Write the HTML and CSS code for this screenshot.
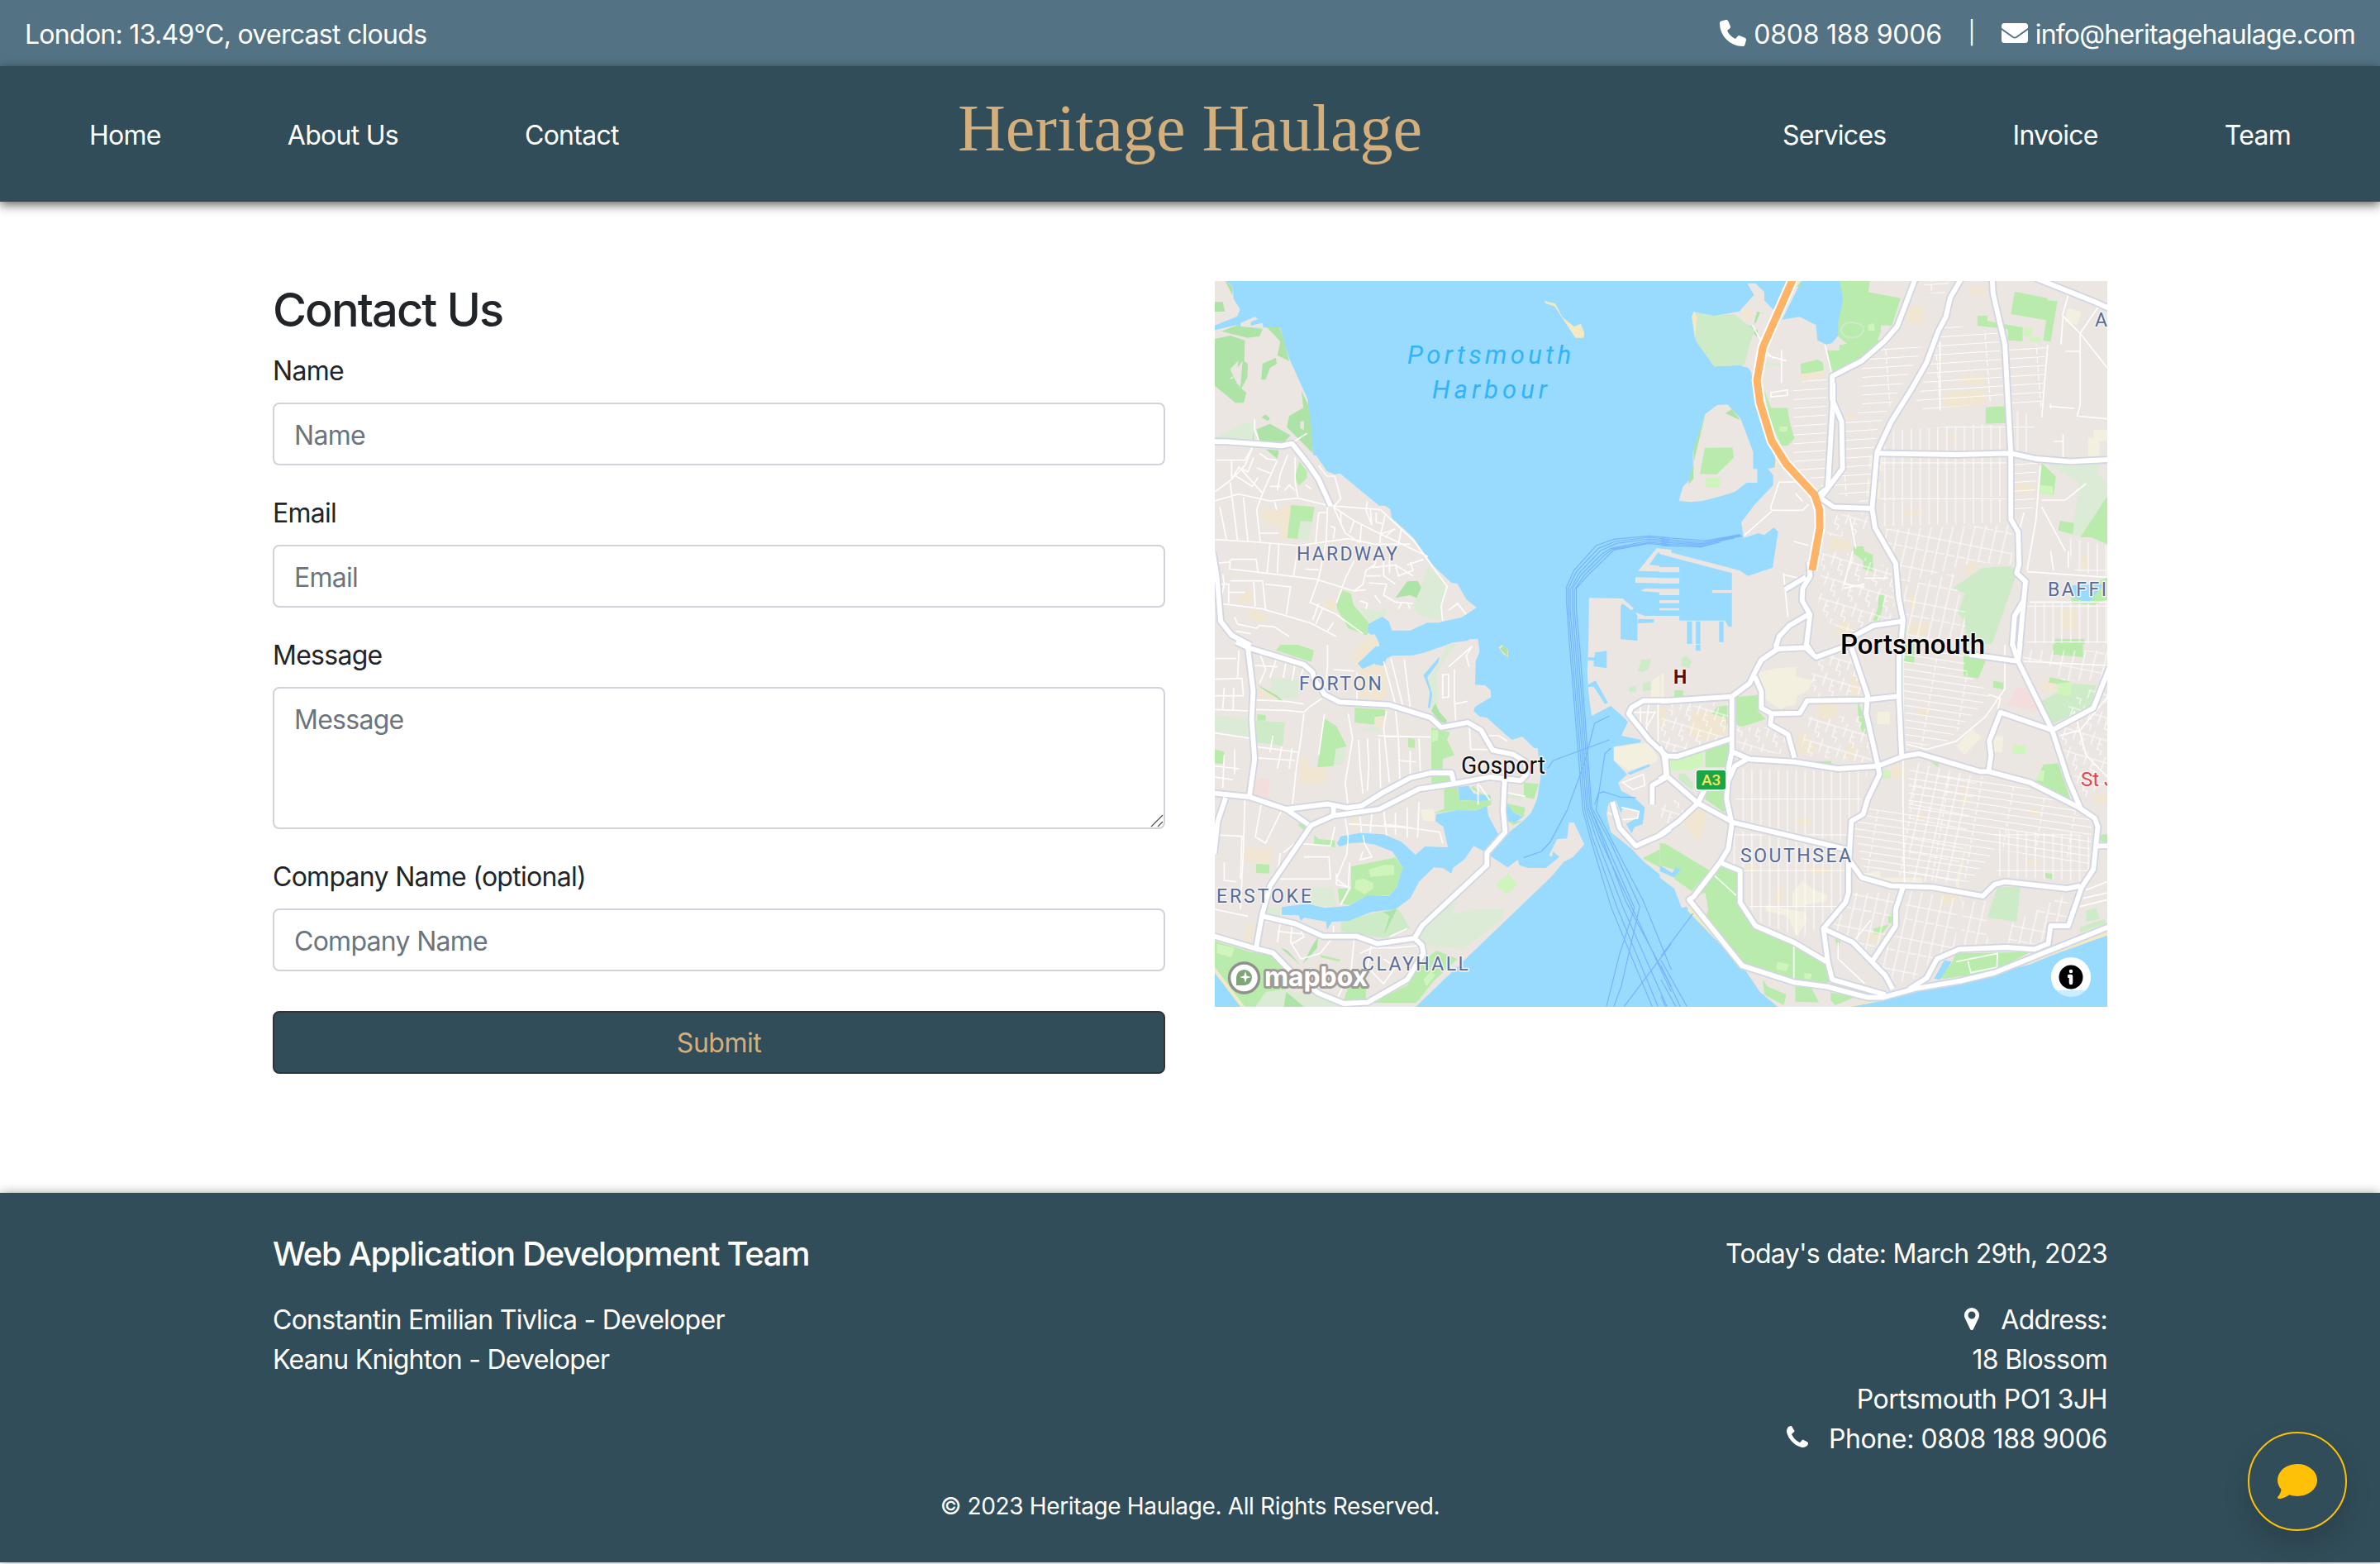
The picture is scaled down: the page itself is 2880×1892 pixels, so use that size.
FILE: index.html
```html
<!DOCTYPE html>
<html lang="en">
<head>
<meta charset="utf-8">
<title>Heritage Haulage - Contact</title>
<link rel="stylesheet" href="styles.css">
</head>
<body>
<div class="topbar">
  <span class="weather">London: 13.49°C, overcast clouds</span>
  <div class="topbar-contact">
    <svg class="icon" viewBox="0 0 512 512"><path d="M164.9 24.6c-7.7-18.6-28-28.5-47.4-23.2l-88 24C12.1 30.2 0 46 0 64C0 311.4 200.6 512 448 512c18 0 33.8-12.1 38.6-29.5l24-88c5.3-19.4-4.6-39.7-23.2-47.4l-96-40c-16.3-6.8-35.2-2.1-46.3 11.6L304.7 368C234.3 334.7 177.3 277.7 144 207.3L193.3 167c13.7-11.2 18.4-30 11.6-46.3l-40-96z"/></svg>
    <span class="tel">0808 188 9006</span>
    <span class="bar">|</span>
    <svg class="icon" viewBox="0 0 32 32"><rect y="4" width="32" height="24" rx="3.5"/><path class="flap" d="M-1 10.300L14 21Q16 22.300 18 21L33 10.300"/></svg>
    <span class="mail">info@heritagehaulage.com</span>
  </div>
</div>
<nav class="navbar">
  <div class="links"><a>Home</a><a>About Us</a><a>Contact</a></div>
  <a class="brand">Heritage Haulage</a>
  <div class="links links-end"><a>Services</a><a>Invoice</a><a>Team</a></div>
</nav>

<main class="container">
  <form class="contact">
    <h3>Contact Us</h3>
    <label for="name">Name</label>
    <input id="name" class="control" placeholder="Name">
    <label for="email">Email</label>
    <input id="email" class="control" placeholder="Email">
    <label for="message">Message</label>
    <div class="message">
      <textarea id="message" class="control" rows="3" placeholder="Message"></textarea>
      <svg class="grip" viewBox="0 0 16 16"><path d="M1 15L15 1M9 15L15 9"/></svg>
    </div>
    <label for="company">Company Name (optional)</label>
    <input id="company" class="control" placeholder="Company Name">
    <button class="submit" type="button">Submit</button>
  </form>

  <div class="map">
  <svg class="map-canvas" viewBox="0 0 1080 878" width="1080" height="878">
    <defs>
      <pattern id="grid-ns" width="30" height="130" patternUnits="userSpaceOnUse"><path class="street" d="M8 0V130M0 40H30"/></pattern>
      <pattern id="grid-ew" width="170" height="32" patternUnits="userSpaceOnUse" patternTransform="rotate(-4)"><path class="street" d="M0 10H170M60 10V32"/></pattern>
      <pattern id="grid-tilt" width="36" height="120" patternUnits="userSpaceOnUse" patternTransform="rotate(12)"><path class="street" d="M8 0V120M0 30H36M8 80H36"/></pattern>
      <pattern id="grid-slope" width="110" height="26" patternUnits="userSpaceOnUse" patternTransform="rotate(9)"><path class="street" d="M0 10H110M50 10V26"/></pattern>
      <pattern id="grid-mix" width="62" height="78" patternUnits="userSpaceOnUse" patternTransform="rotate(18)"><path class="street" d="M8 0V50M0 20H62M34 20V60H50M34 40H46M50 60V78"/></pattern>
      <g id="roads">
        <g transform="translate(-10 -10) scale(.35714 .33333)">
          <path d="M20 612L70 613L255 628L290 620L345 695L380 750L420 845"/>
          <path d="M22 1015L35 1100L48 1265L85 1315L150 1352"/>
        </g>
        <g transform="translate(-10 440) scale(.35714 .33333)">
          <path d="M100 -10L140 10L330 72L360 100L365 125L400 180L450 208L620 218L760 265L795 300L885 282L930 310L970 383L1040 398L1080 425L1085 470L1065 493L960 480L835 505L720 523L585 597L430 620L355 655L320 710L215 875L188 980L168 1100"/>
          <path d="M140 10L158 170L153 270L163 415L145 552"/>
          <path d="M20 538L145 552L270 597L410 578L430 582L475 592L525 585L600 535L690 483L760 465L830 465L838 500"/>
          <path d="M270 597L345 652M430 580V620M65 555L38 640L26 760"/>
          <path d="M20 1056L165 1102L225 1118L290 1190L380 1265L465 1302L545 1298L680 1215L735 1120L730 1090L705 1065L580 1085L510 1058L395 1058L300 1012L190 985"/>
          <path d="M705 1065L730 1020L950 800V755L1012 680L1005 600L1010 490"/>
          <path d="M1570 203H1480L1440 228L1430 250L1500 345L1555 400L1560 480L1510 510V580"/>
          <path d="M1375 570L1400 665L1455 730L1540 690L1570 668"/>
        </g>
        <g transform="translate(540 -10) scale(.35714 .33333)">
          <path d="M862 20L800 195L755 250L680 320L580 375L580 460L612 540L615 710L545 810"/>
          <path d="M583 400L583 460L565 780L530 810L585 850L715 855"/>
          <path d="M1018 20L980 90L965 160L940 210L900 325L850 420L780 540L732 650L715 855L725 925L795 1055L805 1180L820 1260L812 1355"/>
          <path d="M1122 20L1125 75L1165 260L1185 655V895L1210 940L1213 1060L1205 1090L1235 1120L1228 1200L1215 1355M1228 1190L1198 1245L1190 1355"/>
          <path d="M1270 20L1475 108L1520 130"/>
          <path d="M735 655L1000 660L1185 655L1270 675L1385 685L1520 678"/>
          <path d="M502 1048L505 1100L480 1145L478 1190L505 1240L492 1355M420 1150L490 1105M500 1240L435 1280L400 1320L390 1355M650 1320L720 1280L815 1265"/>
        </g>
        <g transform="translate(540 440) scale(.35714 .33333)">
          <path d="M0 205L240 188L300 140L320 95L340 55L395 15L490 10L525 45L640 0M390 -5V20M490 -5L515 35"/>
          <path d="M240 188V390L230 440L222 560L240 650L228 740L200 790L110 915L95 925L275 1165L450 1225L560 1240L700 1280L750 1280L860 1248L1015 1220L1130 1190L1520 1022"/>
          <path d="M245 390L300 415L450 425L600 450L735 440L820 405L875 395L1080 460L1110 460L1250 500L1415 590L1470 630L1480 660L1465 815L1425 880L1380 1020H1320L1312 1085L1265 1105L1170 1098L1010 1105L935 1140L900 1210L840 1250"/>
          <path d="M-5 370L10 403L55 405L240 340M10 400L18 475L125 575L245 645L640 745M-5 690L60 640L125 575L150 520M-5 490L18 475M300 410L250 440L225 500"/>
          <path d="M318 115L340 170V230L375 250L470 248L495 203L690 200L800 187M375 250L370 290L430 325L452 410"/>
          <path d="M645 10L700 185L695 250L735 440L740 470L700 560L685 615L645 640L637 780L680 845L780 875L920 880L1090 912L1130 870L1165 860L1375 885L1420 875"/>
          <path d="M806 -5V190L815 400"/>
          <path d="M635 780V900L625 935L550 1030L565 1150L580 1215L760 1270M550 1030L650 1080L760 1200L785 1250M820 880L795 960V1020L715 1150"/>
          <path d="M200 790L268 820V935L320 1020L450 1080L560 1150"/>
          <path d="M1045 35L1210 60L1325 310L1380 490L1420 590M1190 -5L1210 60L1217 -5"/>
          <path d="M1520 80L1465 230L1325 310L1150 245L1112 350L1118 400L1110 460M1480 730H1520"/>
        </g>
      </g>
    </defs>

    <!-- land and inlets, north-west -->
    <g transform="translate(-10 -10) scale(.35714 .33333)">
      <path class="land" d="M20 20H55L88 50L92 95L114 133L104 158L20 195Z"/>
      <path class="land" d="M20 210L100 190L115 200L250 198L262 250L280 310L343 460L352 560L362 662L372 664L408 720L435 732L452 728L585 845H605L622 858L628 890L700 960L770 1065L830 1125L850 1128L880 1185L915 1215L865 1250L785 1270H748L690 1298L628 1298L618 1265L595 1248L548 1275L543 1315L570 1312L585 1345V1356H20Z"/>
      <path class="land" d="M115 182L163 160L175 168L150 178V192L190 182L192 198H115ZM828 1343L885 1335L890 1330L920 1328L922 1356H815Z"/>
      <path class="sand" d="M1144 102L1182 112L1205 160L1245 195L1268 185L1280 218L1278 236H1250L1180 122L1150 112Z"/>
      <path class="land" d="M1296 1180L1410 1182L1448 1218L1440 1225L1410 1200L1403 1210V1330L1460 1335V1245L1453 1232L1485 1245H1575V1356H1294Z"/>
      <path class="land" d="M1575 1005L1525 1000L1462 1082L1575 1085V1068L1500 1060L1530 1015L1575 1027ZM1453 1105L1575 1108V1127L1453 1125ZM1470 1155L1485 1146L1575 1147V1170H1543V1188H1575V1197H1540V1215H1575V1223H1535V1160Z"/>
      <path class="water" d="M1462 1256L1517 1258L1515 1270L1462 1272Z"/>
      <path class="wood" d="M62 28L88 52V82ZM28 240L80 228L130 245L128 320L140 330L138 380L118 420L135 436L126 472H98L28 410ZM50 212L100 192L190 204L180 230L140 236ZM205 198H248L262 245L280 320L240 300L250 250ZM28 106H55L62 140L28 142ZM190 330L235 308L238 330L215 345L200 388H185ZM322 430L345 480L355 560L360 655L300 590L272 560L280 520L328 490ZM170 568L215 548L285 590L255 625L180 615ZM186 525L200 514L215 528L208 538ZM160 560V610H155ZM640 1180L680 1120L715 1118L730 1145L715 1182L690 1170ZM765 1205L795 1165L788 1205ZM200 640L245 645L240 675Z"/>
      <path class="land" d="M80 350L108 318L105 345L122 320L115 415L102 400ZM78 385L90 373V385ZM318 540L330 538V570L318 565Z"/>
      <path class="grass-soft" d="M28 600L130 545L163 543L155 610H28ZM310 900L358 902L345 972L308 968ZM728 1140L750 1062L815 1138L795 1210L800 1262L720 1245L700 1210ZM495 1165L520 1215L590 1230L610 1210V1240L550 1270Z"/>
      <path class="park" d="M286 842L366 850L358 903L318 900L308 966L273 962ZM315 685L340 720V745L312 773L300 740ZM462 1152L490 1165L498 1205L548 1268L543 1316L480 1290L443 1220L440 1195ZM270 1356L290 1345L300 1356Z"/>
      <path class="school" d="M195 852L258 860V842H286L273 966L248 964L250 925L175 890ZM135 1152H155L150 1198L98 1195ZM145 1215L208 1242L200 1270L140 1258ZM408 1178L440 1192L430 1230L396 1215ZM548 1305L585 1345V1356H520Z"/>
      <path class="street" d="M28 795L85 750L110 705L190 800L240 680M32 680H130L155 635L130 700L85 750V680M160 670L140 722L120 712M28 828L108 803L215 828L310 818L415 845L590 860L700 970L815 1138L795 1210L800 1262M80 760L105 970M125 815L140 975M45 850L68 970M28 968L180 978L310 990L480 965L570 985L690 985M190 800L170 860L182 975M180 655L205 675L235 680M170 708L222 730M100 738L155 775L175 742M240 790L250 730L275 660M300 670V760L310 815M215 775H250M230 830L238 860M410 850L405 980L380 1110L350 1200M380 870H405M370 980L380 870M430 850L500 900L590 948L750 1030M430 850L470 945L520 980M455 868V910M500 900L485 945M525 910L520 980M590 948L585 1000M590 948L640 930M605 880L590 948M545 830L540 860L560 915L555 860M575 870V905L595 910M635 930L605 960M660 930L650 985M435 740L455 820L430 850M380 700L408 738H435M182 945H245M28 1055L75 1050L85 1040H168L175 1090M80 1050L78 1075L200 1090L370 1112L500 1155L540 1150M245 983L240 1090M215 983L205 1090M310 995L295 1100M335 1075L380 1078M500 1045L470 1110L440 1200M420 920L435 925L430 965M55 1095L60 1130L45 1200L190 1220L350 1270L440 1320M80 1118H190L200 1220M160 1122L165 1210M45 1130H75V1200M78 1160H130M200 1130L285 1140L270 1240M95 1250L105 1275L170 1290L180 1280L230 1285L280 1320M100 1300L150 1310M350 1195L440 1240L530 1310M380 1200L360 1260M395 1215L370 1275M410 1300L430 1270M560 1070L640 1060L700 1100M580 1010L570 1060L540 1080L530 1130L500 1155M600 1050V1100L640 1130M620 1040V1090M640 1060L650 1100L700 1080L690 1050M540 1100H590M550 1125L610 1130L600 1170L640 1195L700 1200M570 1170L590 1200M660 1200L650 1220M680 1195L690 1220M520 1190L545 1200L540 1220M735 1040L680 1060M820 1225L850 1200L880 1240M163 530V570L180 615M285 620L340 583M265 790L280 770L300 790M335 770L355 785"/>
    </g>

    <!-- land and inlets, north-east -->
    <g transform="translate(540 -10) scale(.35714 .33333)">
      <path class="land" d="M292 38H320L350 70V100L383 138L430 20H480L410 170L470 160L525 190L530 245L560 260L580 255L602 225V180L617 100L615 50L605 20H1520V1356H-4V1005L265 1080L295 1100L378 1070L397 940L382 925L350 952L330 945L280 962L272 905L318 840L345 810L380 770V735L362 712L388 705V680L375 630L320 450L305 360L295 345L265 335L180 340L120 250L105 160L110 142L180 157L265 140L315 80Z"/>
      <path class="water" d="M-6 1020L240 1090V1285H228L217 1262H62V1245H-6ZM88 1265H105V1356H88ZM118 1265H133V1356H118ZM197 1265H212V1340H197Z"/>
      <path class="land" d="M-6 1068H62V1087H-6ZM-6 1108H62V1128H-6ZM-6 1147H62V1170H-6ZM-6 1188H62V1199H-6ZM-6 1217H62V1225H-6ZM173 1152H240V1162H173Z"/>
      <path class="land" d="M60 828L75 775L108 740V650L150 512L190 480L225 478L270 530L312 650V712H326V762H290L250 795L205 810L140 828L100 832Z"/>
      <path class="wood" d="M218 510L240 495L268 535ZM150 515L110 690V640ZM110 690V748L92 768ZM300 190L328 210L325 232L303 208ZM205 153L250 152V175ZM315 185L325 140L355 150L335 145L322 180ZM460 50L475 32V50Z"/>
      <path class="lawn" d="M110 142L180 157L250 152L318 208L300 260L282 335L180 340L120 250L105 160Z"/>
      <path class="sand" d="M104 160L112 140L122 160L115 240ZM388 672L398 690L390 710H385Z"/>
      <path class="park" d="M148 635L242 634L246 672L188 732L132 730ZM605 30H708L702 70L812 92L782 192L745 190V215L735 240L738 256L680 325L580 370L562 283L605 282V262L630 258L600 230V180L617 100ZM472 330L530 315L548 325L552 355L475 368ZM348 420L372 490H428L438 550L452 600L430 628H408L370 540ZM1198 68L1310 92V100L1343 103L1320 250L1295 246L1305 172L1185 150ZM1072 155H1106V175L1225 198V248L1175 245V205L1072 192ZM1100 488L1168 484V545L1100 548ZM1290 690L1338 740L1330 808L1282 800ZM1352 900L1400 908L1398 950L1345 935ZM1512 810V985L1458 960H1420ZM652 993H685L690 1012L718 1022V1085L685 1075V1045L652 1018ZM737 1168H755V1200L738 1262H718L735 1215ZM1335 1328L1435 1330V1356H1333ZM1390 1165L1512 1105V1185L1470 1205L1390 1200Z"/>
      <path class="grass-soft" d="M1300 690L1490 695L1475 730L1512 760V810L1420 958L1395 950L1415 760ZM355 325L405 328V340H355Z"/>
      <path class="lawn" d="M990 1142L1090 1070L1180 1065L1210 1078L1120 1352L1036 1350L1030 1265L1005 1235L1030 1165Z"/>
      <path class="pitch" d="M1230 198L1258 203L1255 232L1228 228ZM1250 235H1288V250H1250ZM152 745H200V778H152ZM402 558H428V576H402ZM700 190L722 182L725 210H702ZM1282 770L1328 775V808L1282 800ZM830 1290L852 1295L848 1318H830Z"/>
      <path class="school" d="M840 118L888 125V188L830 178ZM1055 48L1102 55L1095 85L1048 80ZM475 368L552 355V378L475 390ZM1022 370L1095 375V408L1018 405ZM965 435L1095 425V480L952 486ZM1200 768L1265 770L1260 798L1202 792ZM828 860H885V882H828ZM572 960L642 975L638 1015L565 1000ZM1032 1060L1055 1050L1070 1055L1060 1090L1035 1100ZM840 1160H855L865 1215L848 1215ZM1352 1222L1412 1225L1408 1298L1352 1295ZM1425 1025L1450 1028V1070H1425ZM622 530L650 500L655 530ZM835 1270L905 1268L900 1320L835 1318ZM275 125L310 140L300 180L272 160ZM978 585H1000V608H978ZM585 1305L620 1255L650 1290V1312Z"/>
      <path class="retail" d="M1378 128L1425 142L1410 188L1368 178ZM1465 570H1512V610H1485V668H1448V600H1465ZM700 745L745 760L740 820L695 810ZM705 668H752V720L705 710Z"/>
      <path class="water" d="M1392 1135L1500 1130L1450 1198L1400 1180Z"/>
      <path fill="url(#grid-ew)" d="M680 330L740 260L890 270L820 400L735 560L720 640L682 500ZM950 185L1140 215L1165 470L950 490L900 500L860 480L945 240ZM448 400L560 380V790L450 700ZM1175 260H1305L1290 490L1190 480ZM620 540L680 500L725 640L700 840L570 790L625 710ZM900 20H985L960 80L880 70ZM1195 690H1275L1260 880H1195Z"/>
      <path fill="url(#grid-ns)" d="M790 570L1100 550L1185 560V645L750 645ZM750 670L1180 665V810L740 830ZM740 835L975 815L1180 820V905L740 920ZM1195 500L1265 520V650H1195ZM1370 960L1512 990V1105L1400 1080ZM1240 1200H1512V1345H1240Z"/>
      <path fill="url(#grid-tilt)" d="M745 930L1190 915V1060L1060 1050L810 1130ZM820 1140L990 1090L1030 1230V1345H835Z"/>
      <path fill="url(#grid-mix)" d="M545 1010L650 1020L780 1070L795 1250L650 1310L530 1250ZM575 880L700 870V960L560 955Z"/>
      <path class="street" d="M372 850L400 760L480 758M372 850Q370 862 380 862H480L500 840M280 955L375 865M370 435L428 425V445L372 450V435M408 280V400M360 300L425 320M455 800L480 830M310 190L360 290L380 310M555 260L580 370M1380 1010V1070M1290 30L1385 60L1360 155L1420 220L1512 345M1355 260L1362 160M1420 220L1490 110M1420 220V480L1410 520L1512 530M1370 285H1420M1315 485L1400 492M1320 475V492M1362 585V675M1330 612H1362M1440 765L1370 825H1290M945 250V500M1310 262L1290 525M1230 870L1215 930M1240 1085L1512 1105M1250 1195H1512M415 1090L430 1250M415 1095L465 1108M1285 700L1270 900L1240 1080M640 890L660 1000M450 975L500 990M690 1108H770M690 1130L620 1145M650 1010L620 1130L690 1140M1320 1010L1330 1080M1290 850L1370 1010"/>
      <path class="oval" d="M610 208Q615 178 650 180Q690 185 685 210Q680 235 645 235Q615 235 610 208Z"/>
      <path class="motorway-case" d="M448 20L345 270L325 390L335 470L375 610L425 695L520 805L537 860L538 925L512 1080"/>
    </g>

    <!-- land and inlets, south-west -->
    <g transform="translate(-10 440) scale(.35714 .33333)">
      <path class="land" d="M20 -3H582L512 68L528 88L570 68L583 85L605 70L608 52L628 40L700 38L740 28L815 0V-3H922L925 25L912 60L910 145L945 148L962 165L964 190L910 225L905 240L925 260L950 265L1012 325L1035 345L1070 333L1110 375H1122L1132 480L1120 560L1100 610L1072 640L1012 692L960 765L1020 808L1055 780L1060 800L1090 810H1150L1195 770L1175 750L1170 768L1160 765L1188 705L1222 703L1228 645H1245L1280 725L1240 772L1210 788L1170 840L700 1323H130L20 1172Z"/>
      <path class="sand" d="M20 1164L140 1323H122L20 1180Z"/>
      <path class="sand" d="M990 10L1000 0L1022 18V45L1005 32Z"/>
      <path class="wood" d="M995 15L1005 3L1020 18V42Z"/>
      <path class="land" d="M1294 -3L1290 100L1295 180L1305 258L1370 222L1405 255L1428 280L1405 330L1472 345L1470 355L1380 370V420L1425 470L1395 500L1405 530L1450 555L1485 590L1478 650L1450 662L1440 685L1422 650L1465 625L1460 600L1412 590L1404 612L1388 565L1362 575L1355 615L1370 680L1440 740L1480 785L1575 868V-3Z"/>
      <path class="water" d="M1316 28L1356 22V85L1312 78V58L1290 56V46H1314ZM1292 145L1318 130L1360 210L1350 215L1312 152L1292 153ZM1425 465L1500 433L1502 442L1435 472ZM1540 810L1575 838V848Z"/>
      <path class="grass-soft" d="M28 258L148 268V335L28 315ZM168 275L266 282L258 365L165 355ZM220 120L310 125V190L270 195L212 180ZM760 105L790 60L815 0L845 -5L800 65L780 105L785 220L762 240L750 130ZM520 310L580 292L590 315ZM430 380L470 370L465 430L430 440ZM730 1020L760 980L850 930L830 980L900 960L960 960L1010 960L1000 1000L870 1105L720 1090ZM1015 535L1072 545L1070 562L1015 555ZM360 880L430 880L440 950L345 945ZM190 955H250V1005L190 980ZM690 1235L745 1260L720 1295ZM200 1240L350 1270L460 1313H160Z"/>
      <path class="lawn" d="M455 1008L560 975L650 958L690 1030L600 1065L455 1040ZM168 275L266 282L258 365L165 355Z"/>
      <path class="park" d="M250 0H310L364 20L355 62L235 20ZM502 228L605 235V258L570 262V290L502 282ZM400 268L440 295L475 368L438 378L430 440L375 445ZM28 380L60 388L58 432L28 430ZM172 252L200 255V275H172ZM683 338L706 342V375L683 372ZM762 300L825 318L815 345L840 400L800 415V450L835 455V495L762 505ZM805 520L850 515L857 565H905L955 562L895 520L905 512L930 540L962 545L965 580L912 602L850 600L770 612L805 595ZM490 805L640 772L665 808L645 880L618 910L545 912L480 945L460 940L490 885ZM1015 575L1080 590L1075 625L1040 610ZM1075 500L1125 505L1110 560L1075 552ZM365 690L380 705L435 710V735L365 725ZM168 795L213 798V830L168 828ZM310 655L320 640L345 665L335 678ZM1020 640H1070L1040 655ZM28 1075L150 1115L215 1120L270 1180L330 1240L200 1260L165 1313H130L28 1170ZM500 1180L540 1190V1290H465ZM735 1145L780 1110L850 1140L770 1220L710 1300H560L680 1235ZM445 885H485L450 940ZM385 1125L455 1142L450 1150L388 1135Z"/>
      <path class="wood" d="M168 142L240 185L260 205L235 198ZM762 240L775 212L790 245L815 275L812 285L790 280ZM598 970L645 960L600 1055L620 985ZM250 1098L275 1110L320 1165ZM378 1060L375 1100L325 1160L360 1090ZM270 1260L330 1313H262Z"/>
      <path class="pitch" d="M505 855L530 848L565 865V885L535 905L502 885ZM550 815L605 798L635 800L636 835L555 842ZM980 870L1022 830L1055 870L1015 905ZM763 310H785V345L763 355ZM35 1085L95 1100L85 1135L35 1120ZM735 1215L760 1185L775 1200L745 1240ZM582 130L605 125L607 165L588 168Z"/>
      <path class="school" d="M515 -3H578L512 68L528 88L580 72L605 80L612 185L585 205L510 195L515 100L495 40ZM172 150L250 200L178 195ZM570 262H602V298H570ZM318 412H345V445L408 448L402 505L325 503L315 500ZM125 738L222 740L215 795L125 790ZM490 625H510L512 665L495 672ZM140 1012H160L150 1085L125 1075ZM1530 225H1555V295H1530Z"/>
      <path class="hospital" d="M165 485L213 487L208 560L155 550Z"/>
      <path class="retail" d="M1380 372L1500 355L1528 405L1525 425L1430 455L1380 420ZM1510 130L1545 105L1570 110V192H1505ZM725 600L770 595L775 640L735 638ZM955 415H985L1030 425L955 430Z"/>
      <path class="lawn" d="M1475 55L1505 52L1500 85L1480 100L1460 95ZM1432 155L1455 148V170H1432ZM1478 140L1505 132V165L1478 168Z"/>
      <path class="park" d="M1478 775L1575 720V830Z"/>
      <path class="water" d="M735 110L790 42L785 65L748 118L765 180L757 230L750 228L757 170ZM852 515L888 512L905 540L962 550L950 565L920 568L890 563L857 565Z"/>
      <path class="water" d="M442 720L455 695L520 683L600 688L660 715L708 762L740 732L818 735L802 660L775 640L778 615L850 600L912 602L950 585L955 620L985 680L1000 705L945 752L905 730L875 778L835 810L830 830L800 810L770 808L720 860L690 920L640 960L560 970L480 1003L425 1005L408 1035L405 1005L330 990L320 1003L312 982L255 980V952L340 940L400 955L480 948L545 910L618 912L645 880L665 808L630 750L570 725L530 718L490 720L450 732ZM1015 572L1040 610L1072 625L1045 645L1020 640Z"/>
      <path class="street" d="M28 125L120 122L125 185H28M60 155L55 235M92 155L90 240M110 20L105 120M28 235L150 240M28 50H100M180 30L200 90L180 140M240 40L215 120M165 75L240 80M270 60L260 120M300 70L290 130M330 80L320 110M160 235L270 238L330 245L350 225L390 195M160 200L270 205L330 215M600 60L640 215M625 50L665 220M670 55L690 225M510 100V200M410 0V80L400 170M430 90L500 95M820 80L900 5L880 40L890 80M840 90V200L845 280M800 108H820V190L800 192ZM840 215L885 205M330 250L320 340L305 440L290 590M28 320L150 340M170 370L310 390M165 410L300 420M225 330L215 390M255 370L240 450M290 375L280 450M400 250L380 400M480 250L495 340L470 500L480 590M610 240L600 300L620 500M640 230L650 340L655 500M580 330L760 335M545 340L550 440L545 530M585 340L590 520M515 345L520 440L530 540M690 385V490M720 340L725 470M650 420L710 425M28 440L110 450M60 400L55 520M95 380V470M28 480L90 490M30 690L120 695L115 850M130 560L125 740L115 960M185 580L165 700M255 600L200 720L170 700M250 755L245 800L230 850M330 770L415 770L420 850H250M260 755L300 720L420 730L435 660M470 630L480 700L475 760L440 850L480 880L485 790M520 625L525 680M560 615L555 680M600 600L610 690M640 610V690M680 590V700M720 570L715 700M480 650L700 665M600 650L790 680L800 720M530 690L535 720L560 770L520 780L530 750M440 830V870L485 880L455 945M28 960L140 985M60 790V855L100 860M200 1005H250L240 1080M240 1040L330 1050M290 1015L285 1080L320 1140L385 1120L430 1060M290 1085L330 1060L320 1040M430 1020V1060M520 1120L560 1100L640 1100M560 1080L545 1170L600 1230L640 1170L600 1140M640 1100L730 1090M500 1070L490 1180L440 1290M620 1060L680 1030M890 285L895 380H960M950 330H990L1020 350M925 510L960 565M1010 490H1080M920 500V580M1010 535L1080 550M1440 245H1520L1490 300L1500 345M1470 205V300M1500 205L1490 290M1530 205V350M1410 500L1480 470L1485 510L1445 525ZM1360 610L1395 625M1405 590L1465 605L1460 630L1410 635"/>
    </g>

    <!-- land and inlets, south-east -->
    <g transform="translate(540 440) scale(.35714 .33333)">
      <path class="land" d="M-4 -3H1520V1050L1450 1070L1250 1160L900 1250L760 1290L600 1323H405L335 1260L275 1165L85 950L70 955L45 885L-4 845Z"/>
      <path class="sand" d="M95 940L280 1170L270 1165L90 965ZM625 1313L760 1280L1100 1200L1300 1115L1520 1030V1052L1250 1155L900 1245L700 1303Z"/>
      <path class="park" d="M-4 720L15 722L165 820L105 895L45 850L55 820L-4 800ZM165 825L200 792L262 815V935L320 1022L450 1085L560 1155L575 1222L560 1228L450 1225L290 1165L150 995L160 960L150 900L130 905ZM255 190L328 182V240L355 270L275 297L255 290ZM190 225L225 220V292L195 290L188 265L168 255ZM150 375L228 348V425L215 445H150ZM145 530H225L215 610L150 560ZM665 205L690 260L695 328L678 310L668 250ZM1270 495L1295 435L1345 430L1390 568L1300 515ZM1025 42L1105 45L1075 122L1025 112ZM1328 -3H1430V45L1328 35ZM818 -3H858V68L818 60ZM1125 130L1160 138V162L1125 155ZM1318 118L1390 135L1385 150L1312 140ZM45 165H75V190H45ZM345 1215L360 1240L425 1270L415 1308L350 1270ZM455 1240L510 1245L535 1298L455 1295ZM575 1262L660 1278L590 1308L575 1290ZM940 1210L985 1155L1000 1120L1250 1115L1130 1185L960 1212ZM720 1030L772 1015L745 1055H722ZM770 980L785 975V1010H770ZM588 1065L608 1078L600 1105ZM1490 690L1520 685V720L1490 712ZM1302 828L1328 832V852L1302 845ZM530 422H578V435L530 432ZM910 422L940 430V445Z"/>
      <path class="lawn" d="M1280 210L1395 140L1475 148L1455 225L1330 285ZM1140 878L1218 880L1205 1005L1105 990ZM1440 965L1475 955L1485 995L1440 1005ZM70 50L85 38L105 60L95 85L68 75ZM1420 1025L1500 995L1512 1010L1420 1045ZM60 470L80 465L110 505L105 525L60 490Z"/>
      <path class="pitch" d="M28 410L142 385V440L100 455L28 458ZM1345 140L1390 135V185L1345 180ZM1190 362L1235 365V398L1190 395ZM750 450L780 460L775 485H750ZM395 1150L435 1160L425 1185L390 1178ZM1285 458L1300 455L1295 495L1270 492ZM485 1190L512 1195L505 1215L485 1210Z"/>
      <path class="school" d="M100 280L120 235L220 265L225 320L150 348L90 320ZM90 600H158L130 720L80 650ZM540 210L600 220L590 260L560 275L525 265ZM465 320L500 325V355L530 370L515 398L455 390ZM635 355L665 365L645 422L615 400ZM780 435H825V485L780 482ZM500 800L575 815L560 835L500 825ZM385 890L415 870L410 940L385 935ZM945 900L1005 910L1005 930L970 935L955 955ZM1030 500L1045 575H1018ZM1285 135L1340 140V175L1285 165ZM455 625L510 635L505 660L452 648ZM640 115H675L670 190L645 180ZM1245 590L1285 600L1280 625L1245 615ZM870 230L912 235L905 262L868 255ZM0 225H15V290H0ZM1455 545L1512 540V575L1470 572ZM870 615L895 620L890 640L868 635ZM1245 775L1290 785L1280 800L1242 795ZM290 790L325 800L315 828L290 820ZM700 1048L750 1050L740 1078L695 1072Z"/>
      <path class="hospital" d="M1205 155L1250 160L1280 242L1170 220Z"/>
      <path class="retail" d="M330 100L400 85L460 80L455 115L515 130L500 165L460 185L455 220L420 225L405 235L350 195ZM1000 370L1052 305L1085 335L1030 398ZM1122 330L1160 332L1155 390L1122 388ZM445 950V900L480 855L510 885L565 910L560 930L490 945L480 950ZM355 945L490 970L495 1000L460 1060L430 985L355 965ZM732 243H775V288H732ZM665 835L740 820L745 845L885 845V880L790 885L665 860ZM1000 850L1040 700L1010 860L1020 945L1000 880ZM0 105H10V190H0Z"/>
      <path class="water" d="M925 1212L960 1145L985 1150L945 1215ZM-4 800L38 828L50 808L66 815L45 845L-4 822ZM118 0H133V22H118Z"/>
      <path fill="url(#grid-mix)" d="M0 240L230 200V330L60 395L0 380ZM250 300L370 300L430 330L440 400L260 380ZM500 20L640 15L690 180L520 190ZM0 580L60 560L120 590L60 640L0 680ZM500 260L690 260L715 430L470 400ZM1390 200L1512 130V500L1430 560L1340 320Z"/>
      <path fill="url(#grid-slope)" d="M820 20L1020 30L1040 110L1120 180L970 350L830 380ZM840 480L1060 470L1240 520L1420 610L1460 640L1450 800L1130 740L1050 860L830 850ZM650 650L700 590L840 600V850L690 830Z"/>
      <path fill="url(#grid-tilt)" d="M840 420L1070 480L1000 860H840ZM650 900L810 900L780 1020L700 1140L570 1040L640 930ZM1020 930L1100 930L1110 1090H1020ZM1190 1010L1380 900V1010L1310 1020L1300 1085L1170 1085ZM1220 60L1300 60L1360 130H1512V80L1512 20H1230ZM840 890L1000 920V1100L930 1130L860 1210L790 1230L730 1150L810 1030Z"/>
      <path fill="url(#grid-ns)" d="M255 450L700 460L670 600L640 720L250 640ZM250 670L620 750L620 920L540 1020L480 1060L340 1010L280 920V810L235 790ZM20 200L110 200V230H20ZM1130 670L1420 690L1460 700L1450 860L1140 840Z"/>
      <path class="street" d="M168 825L265 920M450 1085V1220M710 1000L650 1080M600 1080V1140L690 1230M820 20V600L825 870M1165 0V160L1100 260L1000 350L900 380L830 360M1230 60L1512 75M1110 180L1150 195L1140 240M1400 240L1440 400L1512 480M1350 330L1420 310L1512 190M1440 890L1512 860M1430 920L1512 900M1420 950L1512 925M1000 1150L1140 1120L1138 1170L1050 1190L1040 1150"/>
    </g>

    <!-- ferry routes -->
    <g transform="translate(-10 -10) scale(.35714 .33333)">
      <path class="ferry" d="M1568 962L1500 955L1380 967L1320 990L1245 1080L1220 1140V1200L1230 1352M1568 968L1500 960L1385 975L1328 1000L1253 1085L1226 1145V1210L1236 1352M1568 973L1500 966L1390 982L1335 1008L1262 1090L1232 1150V1220L1243 1352M1568 979L1500 972L1370 1000L1340 1020L1270 1095L1240 1145V1220L1250 1352M1568 985L1500 978L1375 1003L1348 1025L1280 1098L1246 1150V1220L1257 1352M1568 990L1500 982L1380 1006L1290 1100L1253 1145V1220L1264 1352"/>
    </g>
    <g transform="translate(540 -10) scale(.35714 .33333)">
      <path class="ferry" d="M0 960L150 972L270 950M0 966L140 978L270 953M0 972L140 983L275 955M0 978L140 987L250 962M0 984L140 991L200 978M0 990L135 995L190 980"/>
    </g>
    <g transform="translate(-10 440) scale(.35714 .33333)">
      <path class="ferry" d="M1230 0L1275 600L1300 700L1370 950L1510 1313M1236 0L1282 600L1306 695L1390 950L1530 1313M1243 0L1288 595L1320 700L1410 950L1560 1313M1250 0L1294 595L1335 710L1440 950L1575 1260M1257 0L1300 590L1345 700L1450 955L1400 1120L1355 1313M1264 0L1305 590L1370 720L1468 950L1405 1240L1380 1313M1300 590L1420 930L1575 1240M1415 1313L1575 1085M1155 450L1175 420L1365 345M1365 258L1315 285L1280 430L1222 600L1165 715L1135 750L1075 772M1455 555L1400 552L1345 533L1328 540L1315 580M1370 375L1350 395L1320 600L1480 930L1575 1180"/>
    </g>
    <g transform="translate(540 440) scale(.35714 .33333)"><path class="ferry" d="M0 1130L108 975M0 1145L88 1313M0 1165L65 1313M0 1215L50 1313M0 1275L15 1313"/></g>

    <use href="#roads" class="road-case"/>
    <use href="#roads" class="road"/>
    <g transform="translate(540 -10) scale(.35714 .33333)"><path class="motorway" d="M448 20L345 270L325 390L335 470L375 610L425 695L520 805L537 860L538 925L512 1080"/></g>

    <g class="labels">
      <g class="harbour"><text x="233" y="100" textLength="198">Portsmouth</text><text x="263" y="141.500" textLength="139">Harbour</text></g>
      <g class="district">
        <text x="99" y="337.500" textLength="122">HARDWAY</text>
        <text x="102" y="494.500" textLength="100">FORTON</text>
        <text x="2" y="751.500" textLength="115">ERSTOKE</text>
        <text x="178" y="833.500" textLength="129">CLAYHALL</text>
        <text x="1008" y="380.500" textLength="71">BAFFI</text>
        <text x="1065" y="55">A</text>
        <text x="636" y="702.500" textLength="134">SOUTHSEA</text>
      </g>
      <text class="town" x="298" y="596" textLength="102" lengthAdjust="spacingAndGlyphs">Gosport</text>
      <text class="city" x="757" y="450.500" textLength="175" lengthAdjust="spacingAndGlyphs">Portsmouth</text>
      <text class="heliport" x="555" y="487">H</text>
      <text class="station" x="1048" y="611">St J</text>
      <rect class="shield" x="582" y="591" width="37" height="25" rx="4"/>
      <text class="shield-text" x="589" y="610">A3</text>
    </g>

    <g class="logo">
      <circle cx="35.500" cy="843" r="18"/>
      <path class="logo-pin" d="M26 852V842A9.500 9.500 0 1 1 36 852Z"/>
      <path class="logo-star" d="M37 835L38.600 840.400L44 842L38.600 843.600L37 849L35.400 843.600L30 842L35.400 840.400Z"/>
      <text x="60" y="853" textLength="125" lengthAdjust="spacingAndGlyphs">mapbox</text>
    </g>
    <circle class="info-halo" cx="1036" cy="842" r="24"/>
    <path class="info-bg" d="M1018 858A24 24 0 1 1 1054 858Z"/>
    <circle cx="1036" cy="842" r="14.500"/>
    <path class="info-i" d="M1036 835V835M1034 841H1036V849"/>
  </svg>
  </div>
</main>

<footer class="footer">
  <div class="footer-row">
    <div>
      <h5>Web Application Development Team</h5>
      <p>Constantin Emilian Tivlica - Developer</p>
      <p>Keanu Knighton - Developer</p>
    </div>
    <div class="footer-end">
      <p class="date">Today's date: March 29th, 2023</p>
      <p><svg class="icon-pin" viewBox="384 128 1024 1536"><path d="M1152 640q0-106-75-181t-181-75-181 75-75 181 75 181 181 75 181-75 75-181zm256 0q0 109-33 179l-364 774q-16 33-47.500 52t-67.500 19-67.500-19-46.500-52l-365-774q-33-70-33-179 0-212 150-362t362-150 362 150 150 362z"/></svg>Address:</p>
      <p>18 Blossom</p>
      <p class="postcode">Portsmouth PO1 3JH</p>
      <p class="phone"><svg class="icon-phone" viewBox="192 128 1408 1408"><path d="M1600 1240q0 27-10 70.500t-21 68.500q-21 50-122 106-94 51-186 51-27 0-53-3.500t-57.500-12.500-47-14.500-55.500-20.500-49-18q-98-35-175-83-127-79-264-216t-216-264q-48-77-83-175-3-9-18-49t-20.500-55.500-14.500-47-12.500-57.500-3.500-53q0-92 51-186 56-101 106-122 25-11 68.500-21t70.500-10q14 0 21 3 18 6 53 76 11 19 30 54t35 63.500 31 53.500q3 4 17.500 25t21.500 35.500 7 28.500q0 20-28.500 50t-62 55-62 53-28.500 46q0 9 5 22.500t8.500 20.500 14 24 11.500 19q76 137 174 235t235 174q2 1 19 11.500t24 14 20.500 8.500 22.500 5q18 0 46-28.500t53-62 55-62 50-28.500q14 0 28.500 7t35.500 21.500 25 17.500q25 15 53.500 31t63.500 35 54 30q70 35 76 53 3 7 3 21z"/></svg>Phone: 0808 188 9006</p>
    </div>
  </div>
  <p class="copyright">© 2023 Heritage Haulage. All Rights Reserved.</p>
</footer>

<button class="chat" type="button" aria-label="Chat">
  <svg viewBox="0 0 512 512"><path d="M512 240c0 114.900-114.600 208-256 208c-37.100 0-72.300-6.400-104.100-17.900c-11.900 8.700-31.300 20.600-54.300 30.600C73.600 471.100 44.700 480 16 480c-6.500 0-12.300-3.900-14.800-9.900c-2.500-6-1.100-12.800 3.400-17.400l.3-.3c.3-.3 .7-.7 1.300-1.400c1.100-1.200 2.800-3.100 4.900-5.700c4.100-5 9.600-12.400 15.200-21.600c10-16.600 19.500-38.400 21.400-62.900C17.700 326.800 0 285.100 0 240C0 125.100 114.600 32 256 32s256 93.100 256 208z"/></svg>
</button>
</body>
</html>
```
FILE: styles.css
```css
* { box-sizing: border-box; }
body {
  margin: 0;
  font: 400 32px/48px Inter, "Liberation Sans", sans-serif;
  letter-spacing: -0.72px;
  color: #212529;
  background: #fff;
  position: relative;
  height: 1892px;
  overflow: hidden;
}
h3, h5, p { margin: 0; font-weight: 400; }
svg { display: block; }

.topbar {
  height: 80px;
  padding: 0 30px;
  display: flex;
  align-items: center;
  justify-content: space-between;
  background: #537283;
  color: #fff;
}
.topbar-contact { display: flex; align-items: center; }
.weather, .tel, .mail { padding-top: 3px; }
.icon { width: 32px; height: 32px; fill: #fff; margin-right: 9px; }
.flap { fill: none; stroke: #537283; stroke-width: 1.9; }
.tel { letter-spacing: -0.25px; }
.mail { letter-spacing: -0.82px; }
.bar { width: 72px; text-align: center; font-size: 27px; }

.navbar {
  position: relative;
  height: 164px;
  padding: 0 108px;
  display: grid;
  grid-template-columns: 1fr auto 1fr;
  align-items: center;
  background: #314d59;
  color: #fff;
  box-shadow: 0 4px 12px rgba(0, 0, 0, .6);
}
.links { display: flex; gap: 153px; padding-top: 3px; }
.links-end { justify-content: flex-end; }
.brand {
  font: 80px/96px "Liberation Serif", serif;
  letter-spacing: 0;
  color: #d4af7b;
  padding-bottom: 14px;
}

.container {
  width: 2220px;
  margin: 0 auto;
  padding-top: 96px;
  height: 1199px;
  display: grid;
  grid-template-columns: 1fr 1fr;
  gap: 60px;
  align-items: start;
}
.contact { display: flex; flex-direction: column; }
.contact h3 {
  padding-top: 2px;
  margin-bottom: 14px;
  font-size: 56px;
  line-height: 67px;
  font-weight: 500;
  letter-spacing: -1.95px;
}
.contact label { padding-top: 2px; margin-bottom: 14px; }
.control {
  display: block;
  width: 100%;
  height: 76px;
  margin: 0 0 32px;
  padding: 13px 24px 11px;
  border: 2px solid #ced4da;
  border-radius: 8px;
  background: #fff;
  font: inherit;
  letter-spacing: inherit;
  color: #212529;
}
.control::placeholder { color: #6c757d; opacity: 1; }
.message { position: relative; }
textarea.control { height: 172px; padding-top: 14px; resize: none; overflow: hidden; }
.grip {
  position: absolute;
  right: 2px;
  bottom: 34px;
  width: 16px;
  height: 16px;
  fill: none;
  stroke: #555;
  stroke-width: 1.3;
}
.submit {
  height: 76px;
  margin-top: 16px;
  padding: 2px 0 0;
  border: 2px solid #333;
  border-radius: 8px;
  background: #314d59;
  color: #d4af7b;
  font: inherit;
  letter-spacing: -0.5px;
}

.map { width: 1080px; height: 878px; background: #98dbff; overflow: hidden; }
.map path { vector-effect: non-scaling-stroke; }
.land { fill: #ece6e3; }
.water { fill: #98dbff; }
.park { fill: #b9ebac; }
.wood { fill: #ade3a6; }
.lawn { fill: #cdebc7; }
.grass-soft { fill: #dbebd5; }
.pitch { fill: #cff4bc; }
.sand { fill: #f3e9c4; }
.school { fill: #f0e6d1; }
.retail { fill: #f4f0e0; }
.hospital { fill: #f4dedd; }
.street { fill: none; stroke: #fff; stroke-width: 1.7; stroke-opacity: .9; }
pattern .street { stroke-width: 3; vector-effect: none !important; }
.oval { fill: none; stroke: #cdebc7; stroke-width: 2; }
.ferry { fill: none; stroke: #76b5fa; stroke-width: 1.2; }
.road-case { fill: none; stroke: #d2d6e2; stroke-width: 9.5; stroke-linejoin: round; }
.road { fill: none; stroke: #fff; stroke-width: 5.8; stroke-linejoin: round; }
.motorway-case { fill: none; stroke: #fff; stroke-width: 13; }
.motorway { fill: none; stroke: #ffb366; stroke-width: 9; }

.labels text {
  font-family: Roboto, "Liberation Sans", sans-serif;
  letter-spacing: 0;
  stroke: #f6f3f2;
  stroke-width: 3;
  stroke-linejoin: round;
  paint-order: stroke;
}
.labels .harbour text { font-size: 31px; font-style: italic; fill: #30b4fb; stroke: none; }
.labels .district text { font-size: 23px; fill: #586c99; }
.labels .town { font-size: 29px; fill: #111; }
.labels .city { font-size: 33px; font-weight: 500; fill: #000; }
.labels .heliport { font-size: 23px; font-weight: 700; fill: #5c0a12; }
.labels .station { font-size: 24px; fill: #e0474d; }
.shield { fill: #1ca546; stroke: #fff; stroke-width: 1.5; }
.labels .shield-text { font-size: 19px; font-weight: 500; fill: #f7e45b; stroke: none; }
.logo circle { fill: #fff; stroke: #8f918c; stroke-width: 3.5; }
.logo-pin { fill: #7fa579; }
.logo-star { fill: #fff; }
.logo text {
  font: 700 33px Inter, sans-serif;
  letter-spacing: 0;
  fill: #fff;
  stroke: #9f9b98;
  stroke-width: 6;
  stroke-linejoin: round;
  paint-order: stroke;
}
.info-halo { fill: rgba(255, 255, 255, .5); }
.info-bg { fill: #fff; }
.info-i { fill: none; stroke: #fff; stroke-width: 4.5; stroke-linecap: round; stroke-linejoin: round; }

.footer {
  height: 447px;
  padding: 50px 330px 0;
  background: #314d59;
  color: #fff;
  box-shadow: 0 0 12px rgba(0, 0, 0, .35);
}
.footer-row { display: flex; justify-content: space-between; }
.footer h5 {
  margin-bottom: 32px;
  font-size: 40px;
  line-height: 48px;
  font-weight: 500;
  letter-spacing: -1.35px;
}
.footer-end p { display: flex; justify-content: flex-end; align-items: center; }
.footer-end .date { margin-bottom: 32px; }
.footer-end .postcode { letter-spacing: -0.5px; }
.footer-end .phone { letter-spacing: -0.4px; }
.icon-pin { width: 18px; height: 27px; margin-right: 26px; margin-bottom: 3px; fill: #fff; }
.icon-phone { width: 26px; height: 26px; margin-right: 25px; margin-bottom: 6px; fill: #fff; }
.copyright {
  margin-top: 36px;
  font-size: 28px;
  line-height: 42px;
  letter-spacing: -0.35px;
  text-align: center;
}

.chat {
  position: absolute;
  left: 2720px;
  top: 1732px;
  width: 120px;
  height: 120px;
  padding: 0;
  display: flex;
  align-items: center;
  justify-content: center;
  border: 2px solid #ffc107;
  border-radius: 50%;
  background: #314d59;
  box-shadow: 0 16px 32px rgba(0, 0, 0, .15);
}
.chat svg { width: 48px; height: 48px; fill: #ffc107; }
```
